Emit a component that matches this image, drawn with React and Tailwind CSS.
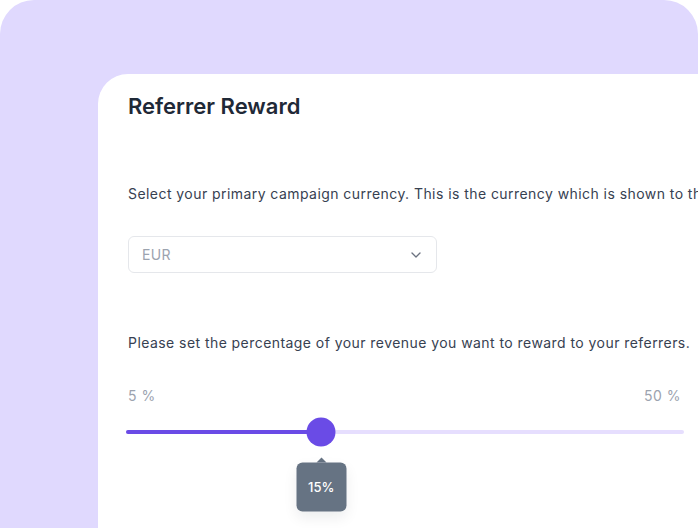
import { ChevronDown } from "lucide-react";

const min = 5;
const max = 50;
const value = 15;
// the handle sits at about a third of the track in the design
const position = 35;

const RewardSlider = () => {
	return (
		<div className="w-[558px] ml-[-2px]">
			<div className="flex justify-between pl-[2px] pr-[3px] text-[14px] text-[#9ca3af] tracking-[0.5px]">
				<span>{min} %</span>
				<span>{max} %</span>
			</div>
			<div className="relative mt-[24px] h-[4px] flex rounded-full bg-[#e6defe]">
				<div className="h-full rounded-full bg-[#6a4be6]" style={{ width: `${position}%` }} />
				<div
					className="absolute top-1/2 -translate-x-1/2 -translate-y-1/2"
					style={{ left: `${position}%` }}
				>
					<div className="h-[29px] w-[29px] rounded-full bg-[#6a4be6]" />
					<div className="absolute left-1/2 top-[40px] -translate-x-1/2 flex flex-col items-center">
						<div className="h-0 w-0 border-x-[5px] border-b-[5px] border-x-transparent border-b-[#667383]" />
						<div className="flex h-[49px] w-[50px] items-center justify-center rounded-[6px] bg-[#667383] text-[13px] font-medium text-white shadow-[0_6px_14px_rgba(17,24,39,0.08)]">
							{value}%
						</div>
					</div>
				</div>
			</div>
		</div>
	);
};

export default function App() {
	return (
		<div
			className="h-[528px] w-[698px] overflow-hidden bg-white"
			style={{ fontFamily: "Inter, 'Noto Sans', sans-serif" }}
		>
			<div className="h-full rounded-t-[34px] bg-[#e0d9fe] pl-[98px] pt-[74px]">
				<div className="h-full w-[720px] overflow-hidden rounded-tl-[30px] bg-white pl-[30px] pt-[17px]">
					<h2 className="text-[22px] font-semibold leading-[30px] text-[#1f2937]">
						Referrer Reward
					</h2>

					<p className="mt-[63px] whitespace-nowrap text-[14px] leading-[20px] tracking-[0.44px] text-[#374151]">
						Select your primary campaign currency. This is the currency which is shown to the referrers.
					</p>

					<div className="mt-[32px] flex h-[37px] w-[309px] items-center justify-between rounded-[6px] border border-[#e5e7eb] pl-[13px] pr-[12px]">
						<span className="text-[14px] tracking-[0.3px] text-[#9ca3af]">EUR</span>
						<ChevronDown size={16} strokeWidth={2} className="text-[#6b7280]" />
					</div>

					<p className="mt-[60px] whitespace-nowrap text-[14px] leading-[20px] tracking-[0.44px] text-[#374151]">
						Please set the percentage of your revenue you want to reward to your referrers.
					</p>

					<div className="mt-[32px]">
						<RewardSlider />
					</div>
				</div>
			</div>
		</div>
	);
}
